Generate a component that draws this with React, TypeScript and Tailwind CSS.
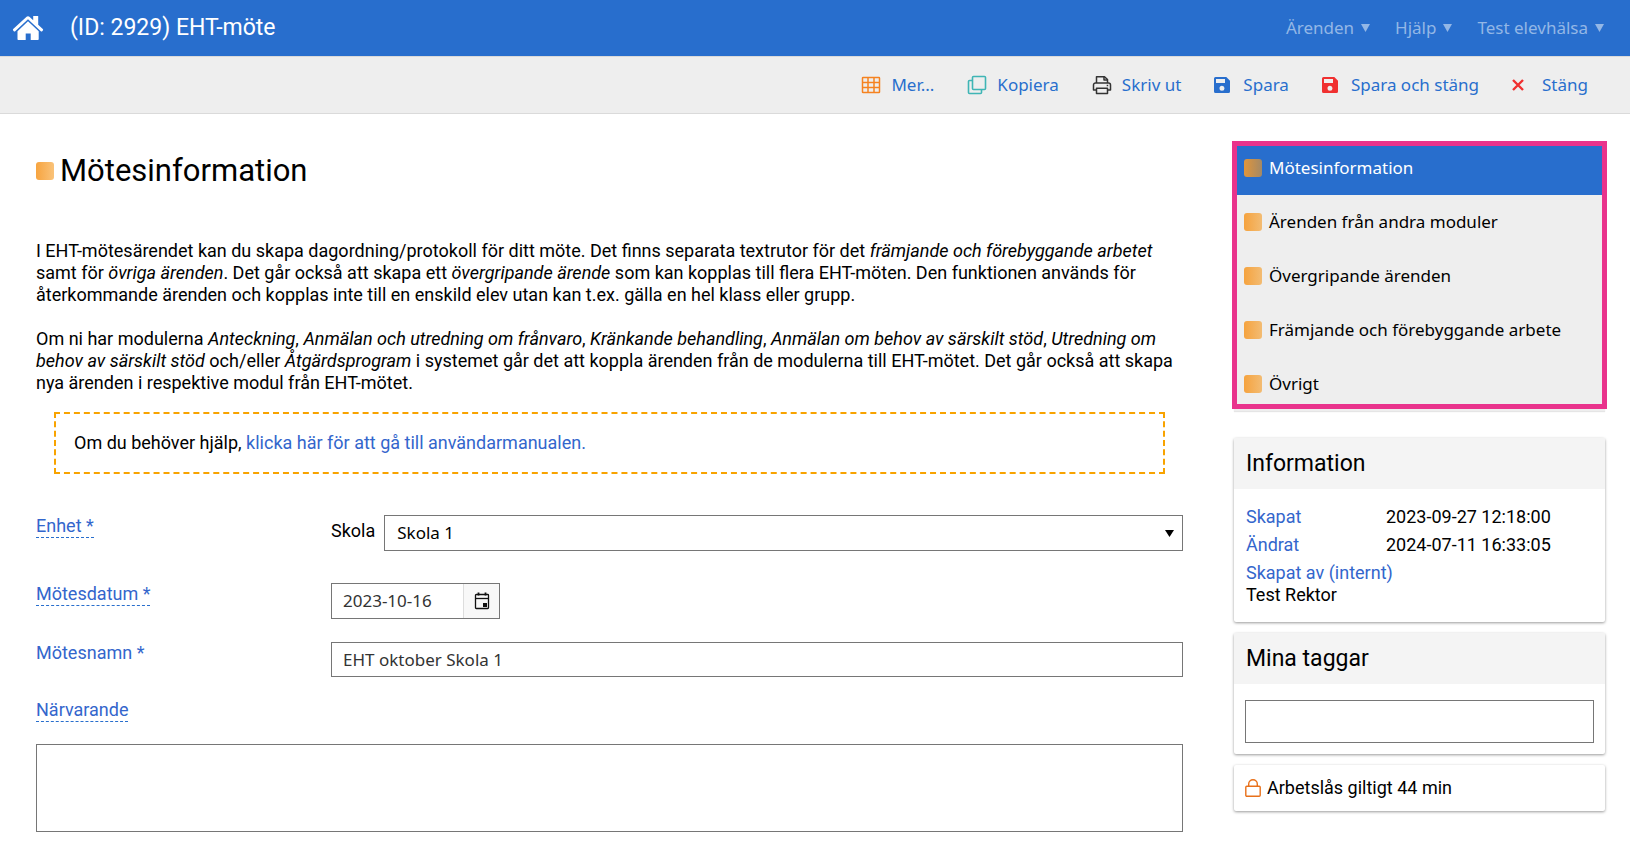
import type { ReactNode } from "react";

const BLUE = "text-[#286ecd]";
const LABEL = "text-[#3366cc]";

function Bullet() {
  return <span className="block size-[18px] shrink-0 rounded-[3px] bg-linear-to-r from-[#f69a2a]/90 to-[#f69a20]/60" />;
}

function Caret() {
  return (
    <svg width="9" height="8" viewBox="0 0 9 8" fill="currentColor" aria-hidden="true">
      <path d="M0 0h9L4.500 8z" />
    </svg>
  );
}

function HomeIcon() {
  return (
    <svg width="32" height="26" viewBox="0 0 32 26" fill="#fff" aria-hidden="true">
      <path d="M16 1.200a2 2 0 0 1 1.400.5l3.800 3.500V1h5v8.800l4.600 4.200c.5.5.4 1.100 0 1.500l-.6.7c-.4.400-1 .4-1.400 0L16 4.300 3.200 16.200c-.4.400-1 .4-1.400 0l-.6-.7c-.4-.4-.4-1 0-1.500L14.600 1.700a2 2 0 0 1 1.400-.5z" />
      <path d="M16 6.300l10.700 9.900V24c0 .6-.4 1-1 1h-7v-6.500h-5V25h-7.200c-.6 0-1-.4-1-1v-7.800z" />
    </svg>
  );
}

function GridIcon() {
  return (
    <svg width="20" height="18" viewBox="0 0 20 18" fill="none" stroke="#f58220" strokeWidth="1.500" aria-hidden="true">
      <rect x="1.500" y="1.500" width="17" height="15" rx=".6" />
      <path d="M7 1.500v15M13 1.500v15M1.500 6.500h17M1.500 11.500h17" />
    </svg>
  );
}

function CopyIcon() {
  return (
    <svg width="20" height="20" viewBox="0 0 20 20" fill="none" stroke="#3fb5b5" strokeWidth="1.600" aria-hidden="true">
      <rect x="5.500" y="1.500" width="13" height="13" rx="1" />
      <path d="M5.500 5.500h-3a1 1 0 0 0-1 1v11a1 1 0 0 0 1 1h11a1 1 0 0 0 1-1v-3" />
    </svg>
  );
}

function PrintIcon() {
  return (
    <svg width="20" height="20" viewBox="0 0 20 20" fill="none" stroke="#333" strokeWidth="1.500" strokeLinejoin="round" aria-hidden="true">
      <path d="M4.500 8V1.700h8L15.500 4.500V8" />
      <path d="M12 1.700v3.300h3.500" />
      <path d="M4.500 15h-3v-5a2 2 0 0 1 2-2h13a2 2 0 0 1 2 2v5h-3" />
      <path d="M4.500 13.200h11v5.300h-11z" />
      <path d="M14.700 10.500h1.500" />
    </svg>
  );
}

function SaveIcon() {
  return (
    <svg width="16" height="16" viewBox="0 0 16 16" fill="currentColor" fillRule="evenodd" aria-hidden="true">
      <path d="M1.500 0h10.800L16 3.700v10.800a1.500 1.500 0 0 1-1.500 1.500h-13A1.500 1.500 0 0 1 0 14.500v-13A1.500 1.500 0 0 1 1.500 0zM2 2v4h9V2zM8 8.800a2.500 2.500 0 1 0 0 5 2.500 2.500 0 0 0 0-5z" />
    </svg>
  );
}

function CloseIcon() {
  return (
    <svg width="12" height="12" viewBox="0 0 12 12" fill="none" stroke="#f03030" strokeWidth="2.400" aria-hidden="true">
      <path d="M1 1l10 10M11 1L1 11" />
    </svg>
  );
}

function CalendarIcon() {
  return (
    <svg width="16" height="18" viewBox="0 0 16 18" fill="none" stroke="#111" strokeWidth="1.300" aria-hidden="true">
      <rect x="1.500" y="2.500" width="13" height="14" rx=".8" />
      <path d="M1.500 6.500h13" />
      <path d="M4.500 .5v3M11.500 .5v3" strokeWidth="1.800" />
      <rect x="9" y="11" width="4" height="4" fill="#111" stroke="none" />
    </svg>
  );
}

function LockIcon() {
  return (
    <svg width="16" height="18" viewBox="0 0 16 18" fill="none" stroke="#e8701a" strokeWidth="1.400" aria-hidden="true">
      <rect x=".8" y="7.300" width="14.400" height="9.900" rx="1" />
      <path d="M3.700 7.300V5a4.300 4.300 0 0 1 8.600 0v2.300" />
    </svg>
  );
}

function ToolButton({ icon, gap, children }: { icon: ReactNode; gap: string; children: ReactNode }) {
  return (
    <button type="button" className={`flex items-center ${gap} ${BLUE}`}>
      {icon}
      {children}
    </button>
  );
}

function Card({ title, children }: { title?: string; children: ReactNode }) {
  return (
    <section className="rounded-xs bg-white shadow-[0_1px_3px_rgba(0,0,0,0.4)]">
      {title && <h2 className="bg-[#f4f4f4] px-3 py-[10px] text-[23px] leading-[31px]">{title}</h2>}
      {children}
    </section>
  );
}

const sections = [
  "Mötesinformation",
  "Ärenden från andra moduler",
  "Övergripande ärenden",
  "Främjande och förebyggande arbete",
  "Övrigt",
];

const menus = ["Ärenden", "Hjälp", "Test elevhälsa"];

const dashed = "border-b border-dashed border-[#286ecd]";

export default function App() {
  return (
    <div className="min-h-screen bg-white font-['Roboto',sans-serif] text-lg leading-[22px] text-black">
      <header className="flex h-14 items-center bg-[#286ecd] pl-3 pr-[26px] text-white">
        <a href="#start" aria-label="Start" className="mr-[26px]">
          <HomeIcon />
        </a>
        <span className="text-[23px]">(ID: 2929) EHT-möte</span>
        <nav className="ml-auto flex gap-[25px] font-['Noto_Sans',sans-serif] text-[17px] text-[#93b7e6]">
          {menus.map((m) => (
            <button key={m} type="button" className="flex items-center gap-[7px]">
              {m}
              <Caret />
            </button>
          ))}
        </nav>
      </header>

      <div className="flex h-[58px] items-center justify-end gap-[33px] border-y border-[#dadada] bg-[#eee] pr-[42px] font-['Noto_Sans',sans-serif] text-[17px]">
        <ToolButton gap="gap-[10px]" icon={<GridIcon />}>Mer...</ToolButton>
        <ToolButton gap="gap-[10px]" icon={<CopyIcon />}>Kopiera</ToolButton>
        <ToolButton gap="gap-[10px]" icon={<PrintIcon />}>Skriv ut</ToolButton>
        <ToolButton gap="gap-[13px]" icon={<SaveIcon />}>Spara</ToolButton>
        <ToolButton gap="gap-[13px]" icon={<span className="text-[#f03030]"><SaveIcon /></span>}>Spara och stäng</ToolButton>
        <ToolButton gap="gap-[18px]" icon={<CloseIcon />}>Stäng</ToolButton>
      </div>

      <div className="flex items-start gap-[51px] pl-9 pr-[25px]">
        <main className="min-w-0 flex-1 pt-[37px]">
          <h1 className="flex items-center gap-[6px] text-[31px] leading-[40px]">
            <Bullet />
            Mötesinformation
          </h1>

          <p className="mt-[49px]">
            I EHT-mötesärendet kan du skapa dagordning/protokoll för ditt möte. Det finns separata textrutor för det{" "}
            <em>främjande och förebyggande arbetet</em> samt för <em>övriga ärenden</em>. Det går också att skapa ett{" "}
            <em>övergripande ärende</em> som kan kopplas till flera EHT-möten. Den funktionen används för återkommande
            ärenden och kopplas inte till en enskild elev utan kan t.ex. gälla en hel klass eller grupp.
          </p>
          <p className="mt-[22px]">
            Om ni har modulerna <em>Anteckning</em>, <em>Anmälan och utredning om frånvaro</em>,{" "}
            <em>Kränkande behandling</em>, <em>Anmälan om behov av särskilt stöd</em>,{" "}
            <em>Utredning om behov av särskilt stöd</em> och/eller <em>Åtgärdsprogram</em> i systemet går det att koppla
            ärenden från de modulerna till EHT-mötet. Det går också att skapa nya ärenden i respektive modul från
            EHT-mötet.
          </p>

          <div className="mx-[18px] mt-[18px] border-2 border-dashed border-[#f8a300] px-[18px] py-[18px]">
            Om du behöver hjälp,{" "}
            <a href="#manual" className={LABEL}>klicka här för att gå till användarmanualen.</a>
          </div>

          <form className="mt-[41px]">
            <div className="flex items-start">
              <div className="w-[295px] shrink-0">
                <span className={`inline-block ${LABEL} ${dashed}`}>Enhet *</span>
              </div>
              <label htmlFor="skola" className="mr-[9px] pt-[5px]">Skola</label>
              <div className="relative flex-1">
                <select id="skola" className="h-9 w-full appearance-none border border-[#767676] bg-white px-3 font-['Noto_Sans',sans-serif] text-[17px]">
                  <option>Skola 1</option>
                </select>
                <svg className="pointer-events-none absolute right-[9px] top-[15px]" width="9" height="7" viewBox="0 0 9 7" aria-hidden="true">
                  <path d="M0 0h9L4.500 7z" />
                </svg>
              </div>
            </div>

            <div className="mt-8 flex items-start">
              <div className="w-[295px] shrink-0">
                <label htmlFor="datum" className={`inline-block ${LABEL} ${dashed}`}>Mötesdatum *</label>
              </div>
              <div className="flex h-9 w-[169px] border border-[#767676] font-['Noto_Sans',sans-serif] text-[17px] text-[#333]">
                <input id="datum" defaultValue="2023-10-16" className="min-w-0 flex-1 px-[11px]" />
                <button type="button" aria-label="Välj datum" className="flex w-9 items-center justify-center border-l border-[#ddd] bg-[#f8f8f8]">
                  <CalendarIcon />
                </button>
              </div>
            </div>

            <div className="mt-[23px] flex items-start">
              <label htmlFor="namn" className={`w-[295px] shrink-0 ${LABEL}`}>Mötesnamn *</label>
              <input id="namn" defaultValue="EHT oktober Skola 1" className="h-[35px] min-w-0 flex-1 border border-[#767676] px-[11px] font-['Noto_Sans',sans-serif] text-[17px] text-[#333]" />
            </div>

            <div className="mt-[22px]">
              <label htmlFor="narvarande" className={`inline-block ${LABEL} ${dashed}`}>Närvarande</label>
              <textarea id="narvarande" className="mt-[22px] block h-[88px] w-full resize-none border border-[#767676] px-3 py-2" />
            </div>
          </form>
        </main>

        <aside className="w-[371px] shrink-0 pt-[27px]">
          <nav className="relative bg-[#eee] font-['Noto_Sans',sans-serif] text-[17px] shadow-[0_1px_1px_rgba(0,0,0,0.1)]">
            {sections.map((s, i) => (
              <a
                key={s}
                href="#sektion"
                className={`flex h-[54px] items-center gap-[7px] pl-[10px] ${i === 0 ? "bg-[#286ecd] text-white" : ""}`}
              >
                <Bullet />
                {s}
              </a>
            ))}
            <span className="pointer-events-none absolute -inset-x-[2px] top-0 bottom-[2px] border-5 border-[#e9338c]" />
          </nav>

          <div className="mt-[27px] flex flex-col gap-[11px]">
            <Card title="Information">
              <dl className="grid grid-cols-[140px_1fr] gap-y-[6px] px-3 pb-4 pt-[17px]">
                <dt className={LABEL}>Skapat</dt>
                <dd>2023-09-27 12:18:00</dd>
                <dt className={LABEL}>Ändrat</dt>
                <dd>2024-07-11 16:33:05</dd>
                <div className="col-span-2">
                  <dt className={LABEL}>Skapat av (internt)</dt>
                  <dd>Test Rektor</dd>
                </div>
              </dl>
            </Card>
            <Card title="Mina taggar">
              <div className="px-[11px] pb-[11px] pt-4">
                <input aria-label="Mina taggar" className="block h-[43px] w-full border border-[#767676] px-3" />
              </div>
            </Card>
            <Card>
              <div className="flex items-center gap-[6px] px-[11px] py-3">
                <LockIcon />
                Arbetslås giltigt 44 min
              </div>
            </Card>
          </div>
        </aside>
      </div>
    </div>
  );
}
